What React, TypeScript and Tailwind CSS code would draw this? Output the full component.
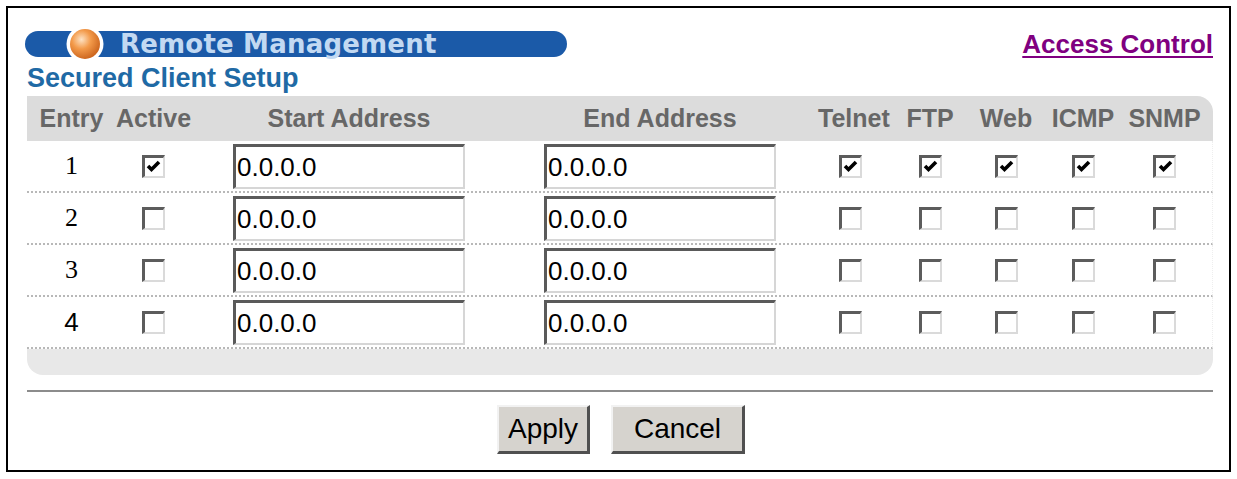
import React from "react";

const cols = "grid grid-cols-[89px_74px_318px_304px_76px_84px_68px_86px_77px]";

function Check({ on }: { on: boolean }) {
  return (
    <div className="w-[23px] h-[23px] bg-white border-t-[3px] border-l-[3px] border-r-2 border-b-2 border-r-[#dadada] border-b-[#dadada] border-t-[#5c5c5c] border-l-[#5c5c5c] flex items-center justify-center">
      {on && (
        <svg width="15" height="13" viewBox="0 0 15 13">
          <path d="M2 6 L5.5 9.5 L13 2" stroke="#000" strokeWidth="3.6" fill="none" strokeLinecap="butt" strokeLinejoin="miter" />
        </svg>
      )}
    </div>
  );
}

function Addr() {
  return (
    <div className="w-[232px] h-[45px] bg-white border-t-[3px] border-l-[3px] border-r-2 border-b-2 border-r-[#d6d6d6] border-b-[#d6d6d6] border-t-[#5a5a5a] border-l-[#5a5a5a] flex items-center pl-[1px]">
      <span className="text-[26px] text-black font-['Liberation_Sans',sans-serif] leading-none">0.0.0.0</span>
    </div>
  );
}

export default function App() {
  const rows = [1, 2, 3, 4];
  return (
    <div className="w-[1237px] h-[479px] bg-white pt-[6px] pl-[6px] pr-[6px] pb-[7px]">
      <div className="h-full border-2 border-black pt-[23px] pl-[19px] pr-[16px] font-['Liberation_Sans',Arial,sans-serif]">
        <div className="flex items-center justify-between -ml-[2px]">
          <div className="w-[542px] h-[26px] rounded-full bg-[#1b5aa8] flex items-center pl-[38px]">
            <svg width="44" height="26" viewBox="0 0 44 26" className="overflow-visible">
              <defs>
                <radialGradient id="ball" cx="0.38" cy="0.35" r="0.7">
                  <stop offset="0" stopColor="#fde2c4" />
                  <stop offset="0.45" stopColor="#f39a4a" />
                  <stop offset="1" stopColor="#c9611a" />
                </radialGradient>
                <clipPath id="pillclip">
                  <rect x="-10" y="0" width="64" height="26" />
                </clipPath>
              </defs>
              <circle cx="22" cy="13" r="18.5" fill="#ffffff" clipPath="url(#pillclip)" />
              <circle cx="22" cy="13" r="15" fill="url(#ball)" />
            </svg>
            <span className="ml-[13px] text-[26px] leading-none font-bold text-[#c2d9f2] font-['DejaVu_Sans',sans-serif] tracking-[0.2px]">
              Remote Management
            </span>
          </div>
          <a className="text-[26px] leading-none font-bold text-[#800080] underline underline-offset-[3px] decoration-2">
            Access Control
          </a>
        </div>
        <div className="mt-[6px] text-[27px] leading-[30px] font-bold text-[#1f6aa5]">Secured Client Setup</div>
        <div className="mt-[3px]">
          <div className={`${cols} h-[45px] bg-[#dcdcdc] rounded-tr-[16px] items-center text-[25px] font-bold text-[#676767] leading-none`}>
            <div className="text-center">Entry</div>
            <div className="text-center">Active</div>
            <div className="text-center">Start Address</div>
            <div className="text-center">End Address</div>
            <div className="text-center pl-[6px]">Telnet</div>
            <div className="text-center">FTP</div>
            <div className="text-center">Web</div>
            <div className="text-center">ICMP</div>
            <div className="text-center">SNMP</div>
          </div>
          {rows.map((n) => (
            <div
              key={n}
              className={`${cols} h-[52px] items-center border-b-2 border-dotted border-[#b8b8b8] border-r border-r-[#eeeeee]`}
            >
              <div
                className={`text-center text-[26px] leading-none text-black ${
                  n === 4 ? "font-['Liberation_Sans',sans-serif]" : "font-['Liberation_Serif',serif]"
                }`}
              >
                {n}
              </div>
              <div className="flex justify-center">
                <Check on={n === 1} />
              </div>
              <div className="flex justify-center">
                <Addr />
              </div>
              <div className="flex justify-center">
                <Addr />
              </div>
              {[0, 1, 2, 3, 4].map((i) => (
                <div key={i} className="flex justify-center">
                  <Check on={n === 1} />
                </div>
              ))}
            </div>
          ))}
          <div className="h-[26px] bg-[#e8e8e8] rounded-b-[16px]" />
        </div>
        <div className="mt-[15px] h-[2px] bg-[#8c8c8c]" />
        <div className="mt-[13px] flex justify-center gap-[21px] pl-[2px]">
          <button className="w-[93px] h-[49px] bg-[#d6d3ce] border-t-2 border-l-2 border-t-[#f2f2f2] border-l-[#f2f2f2] border-r-[3px] border-b-[3px] border-r-[#505050] border-b-[#505050] text-[28px] leading-none text-black font-['Liberation_Sans',sans-serif]">
            Apply
          </button>
          <button className="w-[134px] h-[49px] bg-[#d6d3ce] border-t-2 border-l-2 border-t-[#f2f2f2] border-l-[#f2f2f2] border-r-[3px] border-b-[3px] border-r-[#505050] border-b-[#505050] text-[28px] leading-none text-black font-['Liberation_Sans',sans-serif]">
            Cancel
          </button>
        </div>
      </div>
    </div>
  );
}
